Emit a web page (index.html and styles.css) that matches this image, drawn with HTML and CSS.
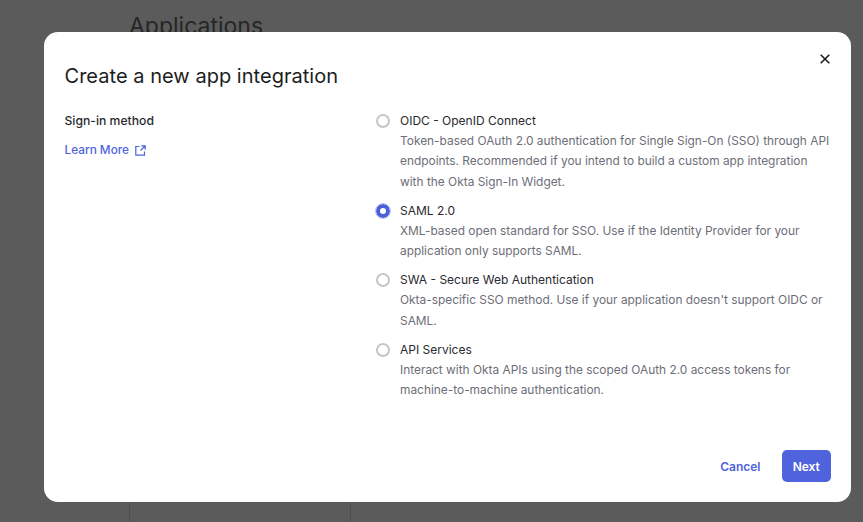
FILE: index.html
```html
<!DOCTYPE html>
<html lang="en">
<head>
<meta charset="utf-8">
<title>Create a new app integration</title>
<link rel="stylesheet" href="styles.css">
</head>
<body>
<main class="page">
  <h1 class="page-title">Applications</h1>
  <div class="page-panel"></div>
</main>
<section class="modal">
  <button class="close" aria-label="Close">
    <svg width="10" height="10" viewBox="0 0 10 10"><path d="M.7.7l8.600 8.600M9.300.7L.7 9.300" fill="none" stroke="#1d1d21" stroke-width="1.600"/></svg>
  </button>
  <h2 class="title">Create a new app integration</h2>
  <div class="content">
    <div class="side">
      <div class="side-label">Sign-in method</div>
      <a class="learn">Learn More
        <svg width="11" height="11" viewBox="0 0 11 11"><path d="M4.500 1.500H.8v8.700h8.700V6.500M6.300.8h3.900v3.900M10 1L5.500 5.500" fill="none" stroke="#4f63dc" stroke-width="1.200"/></svg>
      </a>
    </div>
    <div class="options">
      <div class="option">
        <span class="radio"></span>
        <div class="option-text">
          <div class="option-name">OIDC - OpenID Connect</div>
          <div class="option-desc">Token-based OAuth 2.0 authentication for Single Sign-On (SSO) through API endpoints. Recommended if you intend to build a custom app integration with the Okta Sign-In Widget.</div>
        </div>
      </div>
      <div class="option">
        <span class="radio radio-on"></span>
        <div class="option-text">
          <div class="option-name">SAML 2.0</div>
          <div class="option-desc">XML-based open standard for SSO. Use if the Identity Provider for your application only supports SAML.</div>
        </div>
      </div>
      <div class="option">
        <span class="radio"></span>
        <div class="option-text">
          <div class="option-name">SWA - Secure Web Authentication</div>
          <div class="option-desc">Okta-specific SSO method. Use if your application doesn't support OIDC or SAML.</div>
        </div>
      </div>
      <div class="option">
        <span class="radio"></span>
        <div class="option-text">
          <div class="option-name">API Services</div>
          <div class="option-desc">Interact with Okta APIs using the scoped OAuth 2.0 access tokens for machine-to-machine authentication.</div>
        </div>
      </div>
    </div>
  </div>
  <div class="actions">
    <a class="cancel">Cancel</a>
    <button class="next">Next</button>
  </div>
</section>
</body>
</html>
```
FILE: styles.css
```css
* { box-sizing: border-box; }
html, body { height: 100%; }
body {
  margin: 0;
  background: #5b5b5b;
  font-family: Inter, "Liberation Sans", sans-serif;
  overflow: hidden;
}
.page {
  height: 100%;
  padding: 12px 0 0 129px;
  display: flex;
  flex-direction: column;
  align-items: flex-start;
}
.page-title {
  margin: 0;
  font-size: 23px;
  line-height: 28px;
  font-weight: 400;
  color: #262626;
}
.page-panel {
  width: 222px;
  flex: 1;
  margin-top: 20px;
  border-style: solid;
  border-color: #505050;
  border-width: 0 1px;
}
.modal {
  position: fixed;
  left: 44px;
  top: 32px;
  width: 807px;
  height: 470px;
  padding: 31px 20px 20px 20.500px;
  background: #fff;
  border-radius: 14px;
  display: flex;
  flex-direction: column;
}
.close {
  position: absolute;
  top: 22px;
  right: 21px;
  width: 10px;
  height: 10px;
  padding: 0;
  border: 0;
  background: none;
  display: flex;
}
.title {
  margin: 0;
  font-size: 20px;
  line-height: 26px;
  font-weight: 400;
  letter-spacing: .03px;
  color: #1d1d21;
}
.content {
  display: flex;
  flex: 1;
  margin-top: 22px;
}
.side { width: 310.500px; }
.side-label {
  font-size: 12.200px;
  line-height: 20px;
  font-weight: 500;
  color: #2a2a2f;
}
.learn {
  display: flex;
  align-items: center;
  gap: 6px;
  margin-top: 9px;
  font-size: 11.800px;
  line-height: 20px;
  font-weight: 500;
  color: #4f63dc;
}
.options {
  flex: 1;
  display: flex;
  flex-direction: column;
  gap: 8.800px;
}
.option { display: flex; gap: 10px; }
.radio {
  flex: none;
  width: 14px;
  height: 14px;
  margin: 3px 0 0 1px;
  border: 2px solid #c6c6c6;
  border-radius: 50%;
  background: #fff;
}
.radio-on {
  border: 4.500px solid #4a5fd8;
  outline: 1px solid #b9c2f0;
}
.option-text { flex: 1; }
.option-name {
  font-size: 12px;
  line-height: 20px;
  color: #2a2a2f;
}
.option-desc {
  font-size: 11.900px;
  line-height: 20.350px;
  color: #6e6e78;
}
.actions {
  display: flex;
  justify-content: flex-end;
  align-items: center;
  gap: 21px;
}
.cancel {
  font-size: 12px;
  font-weight: 600;
  color: #4f63dc;
}
.next {
  width: 49.500px;
  height: 32px;
  padding: 0;
  border: 0;
  border-radius: 5px;
  background: #4f63dc;
  color: #fff;
  font: 600 12px Inter, "Liberation Sans", sans-serif;
}
```
